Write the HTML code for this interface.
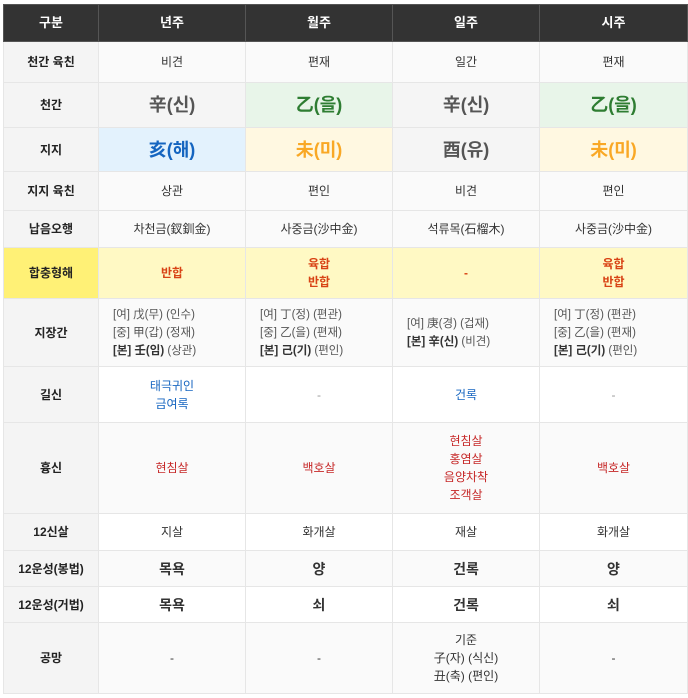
<!DOCTYPE html>
<html><head><meta charset="utf-8"><style>
body{margin:0;background:#fff;font-family:"Liberation Sans","Noto Sans CJK KR",sans-serif;}
table{position:absolute;left:3px;top:4px;border-collapse:collapse;table-layout:fixed;width:684px;}
td,th{border:1px solid #e6e6e6;text-align:center;vertical-align:middle;font-size:12px;color:#333;padding:0;line-height:18px;}
th{background:#333;color:#fff;font-weight:bold;font-size:13px;border-color:#555;}
td.l{background:#f4f4f4;font-weight:bold;color:#222;}
tr.a td{background:#fafafa}
tr.a td.l,tr.b td.l{background:#f4f4f4}
tr.b td{background:#fff}
.big{font-size:18px;font-weight:bold;}
.g{background:#e8f5e9 !important;color:#2e7d32}
.bl{background:#e3f2fd !important;color:#1565c0}
.or{background:#fff8e1 !important;color:#f9a825}
.gr{background:#f5f5f5 !important;color:#555}
.hy td{background:#fff9c4 !important;color:#d84315;font-weight:bold}
.hy td.l{background:#fff176 !important;color:#222}
.blue{color:#1565c0}
.red{color:#c62828}
.jj{text-align:left;padding-left:14px;color:#555;font-size:11.5px;}
.jj b{color:#333}
.un{font-size:14px;font-weight:bold}
</style></head><body>
<table>
<colgroup><col style="width:95px"><col style="width:147px"><col style="width:147px"><col style="width:147px"><col style="width:148px"></colgroup>
<tr style="height:37px"><th>구분</th><th>년주</th><th>월주</th><th>일주</th><th>시주</th></tr>
<tr class="a" style="height:41px"><td class="l">천간 육친</td><td>비견</td><td>편재</td><td>일간</td><td>편재</td></tr>
<tr class="a" style="height:45px"><td class="l">천간</td><td class="big gr">辛(신)</td><td class="big g">乙(을)</td><td class="big gr">辛(신)</td><td class="big g">乙(을)</td></tr>
<tr class="a" style="height:44px"><td class="l">지지</td><td class="big bl">亥(해)</td><td class="big or">未(미)</td><td class="big gr">酉(유)</td><td class="big or">未(미)</td></tr>
<tr class="a" style="height:39px"><td class="l">지지 육친</td><td>상관</td><td>편인</td><td>비견</td><td>편인</td></tr>
<tr class="a" style="height:37px"><td class="l">납음오행</td><td>차천금(釵釧金)</td><td>사중금(沙中金)</td><td>석류목(石榴木)</td><td>사중금(沙中金)</td></tr>
<tr class="hy" style="height:51px"><td class="l">합충형해</td><td>반합</td><td>육합<br>반합</td><td>-</td><td>육합<br>반합</td></tr>
<tr class="a" style="height:68px"><td class="l">지장간</td>
<td class="jj">[여] 戊(무) (인수)<br>[중] 甲(갑) (정재)<br><b>[본] 壬(임)</b> (상관)</td>
<td class="jj">[여] 丁(정) (편관)<br>[중] 乙(을) (편재)<br><b>[본] 己(기)</b> (편인)</td>
<td class="jj">[여] 庚(경) (겁재)<br><b>[본] 辛(신)</b> (비견)</td>
<td class="jj">[여] 丁(정) (편관)<br>[중] 乙(을) (편재)<br><b>[본] 己(기)</b> (편인)</td></tr>
<tr class="b" style="height:56px"><td class="l">길신</td><td class="blue">태극귀인<br>금여록</td><td style="color:#999">-</td><td class="blue">건록</td><td style="color:#999">-</td></tr>
<tr class="a" style="height:91px"><td class="l">흉신</td><td class="red">현침살</td><td class="red">백호살</td><td class="red">현침살<br>홍염살<br>음양차착<br>조객살</td><td class="red">백호살</td></tr>
<tr class="b" style="height:37px"><td class="l">12신살</td><td>지살</td><td>화개살</td><td>재살</td><td>화개살</td></tr>
<tr class="a" style="height:36px"><td class="l">12운성(봉법)</td><td class="un">목욕</td><td class="un">양</td><td class="un">건록</td><td class="un">양</td></tr>
<tr class="b" style="height:36px"><td class="l">12운성(거법)</td><td class="un">목욕</td><td class="un">쇠</td><td class="un">건록</td><td class="un">쇠</td></tr>
<tr class="a" style="height:71px"><td class="l">공망</td><td>-</td><td>-</td><td>기준<br>子(자) (식신)<br>丑(축) (편인)</td><td>-</td></tr>
</table>
</body></html>
